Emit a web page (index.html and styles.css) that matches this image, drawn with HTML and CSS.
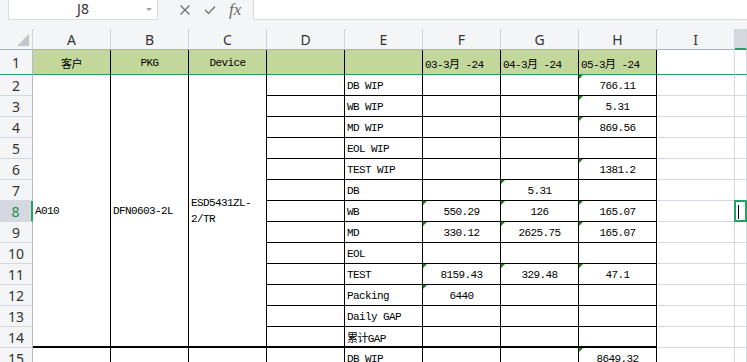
FILE: index.html
```html
<!DOCTYPE html>
<html lang="zh-CN">
<head>
    <meta charset="UTF-8">
    <title>J8</title>
    <link rel="stylesheet" href="styles.css">
</head>
<body>

    <!-- 名称框 / 编辑栏 -->
    <div class="topbar">
        <div class="namebox">J8<span class="drop"></span></div>
        <div class="tools">
            <svg width="12" height="12" viewBox="0 0 12 12"><path d="M1.5 1.5 L10.5 10.5 M10.5 1.5 L1.5 10.5" stroke="#6b6b6b" stroke-width="1.2" fill="none"/></svg>
            <svg width="12" height="12" viewBox="0 0 12 12"><path d="M1 6 L4.5 9.5 L11 2.5" stroke="#6b6b6b" stroke-width="1.2" fill="none"/></svg>
            <span class="fx">fx</span>
        </div>
        <div class="formula"></div>
    </div>

    <!-- 表格 -->
    <div class="sheet">
        <div class="ch corner"><span class="tri"></span></div>
        <div class="ch">A</div><div class="ch">B</div><div class="ch">C</div><div class="ch">D</div><div class="ch">E</div>
        <div class="ch">F</div><div class="ch">G</div><div class="ch">H</div><div class="ch">I</div><div class="ch sel-col"></div>

        <!-- 1 -->
        <div class="rh frz">1</div>
        <div class="c t hd frz mid">客户</div>
        <div class="c t hd frz mid">PKG</div>
        <div class="c t hd frz mid">Device</div>
        <div class="c t hd frz"></div>
        <div class="c t hd frz"></div>
        <div class="c t hd frz">03-3月 -24</div>
        <div class="c t hd frz">04-3月 -24</div>
        <div class="c t hd frz">05-3月 -24</div>
        <div class="c frz"></div><div class="c frz"></div>

        <!-- 2 -->
        <div class="rh">2</div>
        <div class="c t span last">A010</div>
        <div class="c t span last">DFN0603-2L</div>
        <div class="c t span last wrap">ESD5431ZL-<br>2/TR</div>
        <div class="c t"></div><div class="c t">DB WIP</div><div class="c t"></div><div class="c t"></div><div class="c t mid tx">766.11</div>
        <div class="c"></div><div class="c"></div>

        <div class="rh">3</div>
        <div class="c t"></div><div class="c t">WB WIP</div><div class="c t"></div><div class="c t"></div><div class="c t mid tx">5.31</div>
        <div class="c"></div><div class="c"></div>

        <div class="rh">4</div>
        <div class="c t"></div><div class="c t">MD WIP</div><div class="c t"></div><div class="c t"></div><div class="c t mid tx">869.56</div>
        <div class="c"></div><div class="c"></div>

        <div class="rh">5</div>
        <div class="c t"></div><div class="c t">EOL WIP</div><div class="c t"></div><div class="c t"></div><div class="c t"></div>
        <div class="c"></div><div class="c"></div>

        <div class="rh">6</div>
        <div class="c t"></div><div class="c t">TEST WIP</div><div class="c t"></div><div class="c t"></div><div class="c t mid tx">1381.2</div>
        <div class="c"></div><div class="c"></div>

        <div class="rh">7</div>
        <div class="c t"></div><div class="c t">DB</div><div class="c t"></div><div class="c t mid tx">5.31</div><div class="c t"></div>
        <div class="c"></div><div class="c"></div>

        <div class="rh sel-row">8</div>
        <div class="c t"></div><div class="c t">WB</div><div class="c t mid tx">550.29</div><div class="c t mid tx">126</div><div class="c t mid tx">165.07</div>
        <div class="c"></div><div class="c active"><span class="caret"></span></div>

        <div class="rh">9</div>
        <div class="c t"></div><div class="c t">MD</div><div class="c t mid tx">330.12</div><div class="c t mid tx">2625.75</div><div class="c t mid tx">165.07</div>
        <div class="c"></div><div class="c"></div>

        <div class="rh">10</div>
        <div class="c t"></div><div class="c t">EOL</div><div class="c t"></div><div class="c t"></div><div class="c t"></div>
        <div class="c"></div><div class="c"></div>

        <div class="rh">11</div>
        <div class="c t"></div><div class="c t">TEST</div><div class="c t mid tx">8159.43</div><div class="c t mid tx">329.48</div><div class="c t mid tx">47.1</div>
        <div class="c"></div><div class="c"></div>

        <div class="rh">12</div>
        <div class="c t"></div><div class="c t">Packing</div><div class="c t mid tx">6440</div><div class="c t"></div><div class="c t"></div>
        <div class="c"></div><div class="c"></div>

        <div class="rh">13</div>
        <div class="c t"></div><div class="c t">Daily GAP</div><div class="c t"></div><div class="c t"></div><div class="c t"></div>
        <div class="c"></div><div class="c"></div>

        <div class="rh">14</div>
        <div class="c t last"></div><div class="c t last">累计GAP</div><div class="c t last"></div><div class="c t last"></div><div class="c t last"></div>
        <div class="c"></div><div class="c"></div>

        <!-- 15 -->
        <div class="rh">15</div>
        <div class="c t"></div><div class="c t"></div><div class="c t"></div><div class="c t"></div>
        <div class="c t">DB WIP</div><div class="c t"></div><div class="c t"></div><div class="c t mid tx">8649.32</div>
        <div class="c"></div><div class="c"></div>
    </div>

</body>
</html>
```

FILE: styles.css
```css
body {
    margin: 0;
    height: 100vh;
    overflow: hidden;
    background-color: #f4f5f7;
    font-family: 'Noto Sans', 'Open Sans', sans-serif;
    color: #333;
}

/* 编辑栏 */
.topbar {
    display: flex;
    height: 20px;
    padding-left: 8px;
    margin-bottom: 9px;
}

.namebox {
    width: 150px;
    box-sizing: border-box;
    background-color: white;
    border: 1px solid #d9dbe0;
    border-top: none;
    position: relative;
    text-align: center;
    font-size: 14px;
    line-height: 18px;
    color: #333;
}

.drop {
    position: absolute;
    right: 5px;
    top: 8px;
    border-top: 3px solid #a0a0a0;
    border-left: 3px solid transparent;
    border-right: 3px solid transparent;
}

.tools {
    width: 95px;
    display: flex;
    align-items: center;
    gap: 13px;
    padding-left: 21px;
    box-sizing: border-box;
}

.fx {
    font-family: 'Liberation Serif', serif;
    font-style: italic;
    font-size: 17px;
    color: #6b6b6b;
    line-height: 20px;
}

.formula {
    flex: 1;
    background-color: white;
    border-left: 1px solid #d9dbe0;
    border-bottom: 1px solid #d2d5dc;
}

/* 表格 */
.sheet {
    display: grid;
    grid-template-columns: 33px repeat(9, 78px) 1fr;
    grid-template-rows: 21px 25px repeat(14, 21px);
    background-color: white;
}

.ch {
    background-color: #f4f5f7;
    border-right: 1px solid #cdd1da;
    border-bottom: 1px solid #aab1c0;
    font-size: 14px;
    display: flex;
    align-items: center;
    justify-content: center;
    color: #333;
}

.corner {
    position: relative;
}

.tri {
    position: absolute;
    right: 3px;
    bottom: 3px;
    width: 12px;
    height: 12px;
    background-color: #c3c6cc;
    clip-path: polygon(100% 0, 100% 100%, 0 100%);
}

.sel-col {
    background-color: #d5d8de;
    border-bottom: 2px solid #21a366;
}

.rh {
    background-color: #f4f5f7;
    border-right: 1px solid #b4bbc9;
    border-bottom: 1px solid #d3d7df;
    font-size: 14px;
    display: flex;
    align-items: center;
    justify-content: center;
    color: #333;
}

.sel-row {
    background-color: #d5d8de;
    border-right: 2px solid #21a366;
    color: #1f8f57;
}

.c {
    box-sizing: border-box;
    border-right: 1px solid #d5d9e1;
    border-bottom: 1px solid #d5d9e1;
    font-family: 'Liberation Mono', 'Noto Sans CJK SC', monospace;
    font-size: 11px;
    letter-spacing: -0.6px;
    color: black;
    display: flex;
    align-items: center;
    padding: 1px 2px 0;
    white-space: nowrap;
    overflow: hidden;
    position: relative;
}

.t {
    border-right-color: black;
    border-bottom-color: black;
}

.hd {
    background-color: #c4d79b;
}

.frz {
    border-bottom: 1px solid #21a366;
}

.mid {
    justify-content: center;
}

.span {
    grid-row: span 13;
}

.wrap {
    white-space: normal;
    line-height: 16px;
}

.last {
    border-bottom: 2px solid black;
}

/* 文本型数字的绿色小三角 */
.tx::before {
    content: '';
    position: absolute;
    top: 0;
    left: 0;
    border-top: 4px solid #128a12;
    border-right: 4px solid transparent;
}

.active {
    border: 2px solid #21a366;
    margin: -1px 0 0 -1px;
}

.caret {
    width: 1px;
    height: 14px;
    background-color: black;
}
```
